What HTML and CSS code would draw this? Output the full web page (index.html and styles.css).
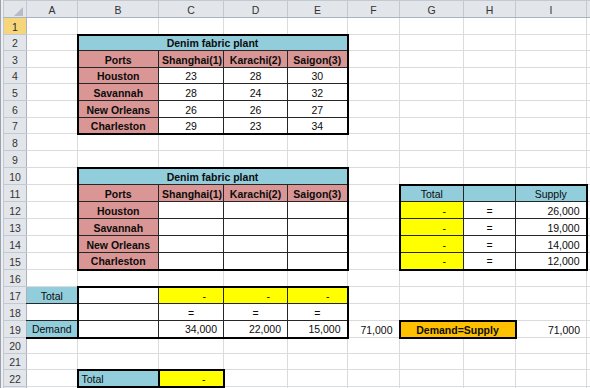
FILE: index.html
```html
<!DOCTYPE html>
<html>
<head>
<meta charset="utf-8">
<link rel="stylesheet" href="styles.css">
</head>
<body>
<div class="frame">
<table class="sheet">
<colgroup>
<col class="w-rh"><col class="w-a"><col class="w-b"><col class="w-c"><col class="w-d"><col class="w-e"><col class="w-f"><col class="w-g"><col class="w-h"><col class="w-i"><col class="w-j">
</colgroup>
<tr class="hdr"><th class="corner"><div class="tri"></div></th><th>A</th><th>B</th><th>C</th><th>D</th><th>E</th><th>F</th><th>G</th><th>H</th><th>I</th><th></th></tr>
<tr class="h17"><th class="rh sel">1</th><td></td><td></td><td></td><td></td><td></td><td></td><td></td><td></td><td></td><td></td></tr>
<tr class="h16"><th class="rh">2</th><td></td><td colspan="4" class="teal b c dk tt tl tr">Denim fabric plant</td><td></td><td></td><td></td><td></td><td></td></tr>
<tr class="h17"><th class="rh">3</th><td></td><td class="pink b c dk tl">Ports</td><td class="pink b c dk">Shanghai(1)</td><td class="pink b c dk">Karachi(2)</td><td class="pink b c dk tr">Saigon(3)</td><td></td><td></td><td></td><td></td><td></td></tr>
<tr class="h16"><th class="rh">4</th><td></td><td class="pink b c dk tl">Houston</td><td class="c dk">23</td><td class="c dk">28</td><td class="c dk tr">30</td><td></td><td></td><td></td><td></td><td></td></tr>
<tr class="h17"><th class="rh">5</th><td></td><td class="pink b c dk tl">Savannah</td><td class="c dk">28</td><td class="c dk">24</td><td class="c dk tr">32</td><td></td><td></td><td></td><td></td><td></td></tr>
<tr class="h17"><th class="rh">6</th><td></td><td class="pink b c dk tl">New Orleans</td><td class="c dk">26</td><td class="c dk">26</td><td class="c dk tr">27</td><td></td><td></td><td></td><td></td><td></td></tr>
<tr class="h16"><th class="rh">7</th><td></td><td class="pink b c dk tl tb">Charleston</td><td class="c dk tb">29</td><td class="c dk tb">23</td><td class="c dk tr tb">34</td><td></td><td></td><td></td><td></td><td></td></tr>
<tr class="h17"><th class="rh">8</th><td></td><td></td><td></td><td></td><td></td><td></td><td></td><td></td><td></td><td></td></tr>
<tr class="h17"><th class="rh">9</th><td></td><td></td><td></td><td></td><td></td><td></td><td></td><td></td><td></td><td></td></tr>
<tr class="h17"><th class="rh">10</th><td></td><td colspan="4" class="teal b c dk tt tl tr">Denim fabric plant</td><td></td><td></td><td></td><td></td><td></td></tr>
<tr class="h17"><th class="rh">11</th><td></td><td class="pink b c dk tl">Ports</td><td class="pink b c dk">Shanghai(1)</td><td class="pink b c dk">Karachi(2)</td><td class="pink b c dk tr">Saigon(3)</td><td></td><td class="teal c dk tt tl">Total</td><td class="teal dk tt"></td><td class="teal c dk tt tr">Supply</td><td></td></tr>
<tr class="h17"><th class="rh">12</th><td></td><td class="pink b c dk tl">Houston</td><td class="dk"></td><td class="dk"></td><td class="dk tr"></td><td></td><td class="yellow acc dk tl">-</td><td class="c dk">=</td><td class="num dk tr">26,000</td><td></td></tr>
<tr class="h17"><th class="rh">13</th><td></td><td class="pink b c dk tl">Savannah</td><td class="dk"></td><td class="dk"></td><td class="dk tr"></td><td></td><td class="yellow acc dk tl">-</td><td class="c dk">=</td><td class="num dk tr">19,000</td><td></td></tr>
<tr class="h17"><th class="rh">14</th><td></td><td class="pink b c dk tl">New Orleans</td><td class="dk"></td><td class="dk"></td><td class="dk tr"></td><td></td><td class="yellow acc dk tl">-</td><td class="c dk">=</td><td class="num dk tr">14,000</td><td></td></tr>
<tr class="h17"><th class="rh">15</th><td></td><td class="pink b c dk tl tb">Charleston</td><td class="dk tb"></td><td class="dk tb"></td><td class="dk tr tb"></td><td></td><td class="yellow acc dk tl tb">-</td><td class="c dk tb">=</td><td class="num dk tr tb">12,000</td><td></td></tr>
<tr class="h17"><th class="rh">16</th><td></td><td></td><td></td><td></td><td></td><td></td><td></td><td></td><td></td><td></td></tr>
<tr class="h17"><th class="rh">17</th><td class="teal c bb">Total</td><td class="dk tt tl"></td><td class="yellow acc dk tt">-</td><td class="yellow acc dk tt">-</td><td class="yellow acc dk tt tr">-</td><td></td><td></td><td></td><td></td><td></td></tr>
<tr class="h17"><th class="rh">18</th><td class="bb"></td><td class="dk tl"></td><td class="c dk">=</td><td class="c dk">=</td><td class="c dk tr">=</td><td></td><td></td><td></td><td></td><td></td></tr>
<tr class="h17"><th class="rh">19</th><td class="teal c tb">Demand</td><td class="dk tl tb"></td><td class="num dk tb">34,000</td><td class="num dk tb">22,000</td><td class="num dk tb tr">15,000</td><td class="num">71,000</td><td colspan="2" class="orange b c tt tb tl tr">Demand=Supply</td><td class="num">71,000</td><td></td></tr>
<tr class="h16"><th class="rh">20</th><td></td><td></td><td></td><td></td><td></td><td></td><td></td><td></td><td></td><td></td></tr>
<tr class="h16"><th class="rh">21</th><td></td><td></td><td></td><td></td><td></td><td></td><td></td><td></td><td></td><td></td></tr>
<tr class="h17"><th class="rh">22</th><td></td><td class="teal l tt tb tl tr">Total</td><td class="yellow acc tt tb tl tr">-</td><td></td><td></td><td></td><td></td><td></td><td></td><td></td></tr>
<tr class="h17"><th class="rh"></th><td></td><td></td><td></td><td></td><td></td><td></td><td></td><td></td><td></td><td></td></tr>
</table>
</div>
</body>
</html>
```

FILE: styles.css
```css
html, body {
  margin: 0;
  padding: 0;
  background: #ffffff;
  overflow: hidden;
}

.frame {
  border-left: 1px solid #9aa1aa;
  padding-left: 2px;
  background: #eceef1;
  width: 700px;
  height: 400px;
}

.sheet {
  border-collapse: collapse;
  table-layout: fixed;
  width: 663px;
  font-family: "Liberation Sans", Arial, sans-serif;
  font-size: 10.5px;
  color: #0c0c0c;
  background: #ffffff;
}

.w-rh { width: 23px; }
.w-a { width: 51px; }
.w-b { width: 81px; }
.w-c { width: 65px; }
.w-d { width: 64px; }
.w-e { width: 60px; }
.w-f { width: 52px; }
.w-g { width: 64px; }
.w-h { width: 52px; }
.w-i { width: 71px; }
.w-j { width: 80px; }

.hdr { height: 17px; }
.h16 { height: 16px; }
.h17 { height: 17px; }

th {
  background: #e2e6eb;
  border: 1px solid #c3c9d1;
  color: #333333;
  font-weight: normal;
  padding: 2px 0 0 0;
  text-align: center;
  vertical-align: middle;
}

.hdr th {
  border-bottom: 1px solid #a9b2be;
}

.rh {
  border-right: 1px solid #a9b2be;
  padding: 1px 0 0 0;
}

.sel {
  background: #f7d57a;
  color: #2c2c2c;
}

.corner {
  padding: 0;
}

.tri {
  width: 0;
  height: 0;
  margin: 4px 3px 0 auto;
  border-left: 9px solid transparent;
  border-bottom: 9px solid #b5bcc6;
}

td {
  border: 1px solid #d9dbdd;
  padding: 1px 3px 0 3px;
  white-space: nowrap;
  overflow: hidden;
  vertical-align: middle;
}

.teal { background: #92cddc; }
.pink { background: #da9694; }
.yellow { background: #ffff00; }
.orange { background: #ffc000; }

.b { font-weight: bold; }
.c { text-align: center; }
.l { text-align: left; }
.num { text-align: right; padding-right: 6px; }
.acc { text-align: right; padding-right: 17px; }

.dk { border: 1px double #262626; }
.bb { border-bottom: 1px double #262626; }
.tt { border-top: 2px solid #000000; }
.tb { border-bottom: 2px solid #000000; }
.tl { border-left: 2px solid #000000; }
.tr { border-right: 2px solid #000000; }
```
